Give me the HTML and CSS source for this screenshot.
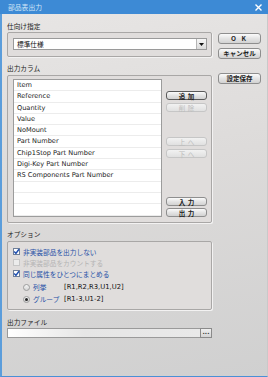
FILE: index.html
```html
<!DOCTYPE html>
<html lang="ja">
<head>
    <meta charset="UTF-8">
    <title>部品表出力</title>
    <link rel="stylesheet" href="styles.css">
</head>
<body>
    <div class="window">
        <div class="titlebar">
            <span class="title">部品表出力</span>
            <svg class="close" width="7" height="7" viewBox="0 0 7 7"><path d="M0.5 0.5 L6.5 6.5 M6.5 0.5 L0.5 6.5" stroke="#fff" stroke-width="1.4"/></svg>
        </div>
        <div class="client">
            <div class="main">
                <div class="label first">仕向け指定</div>
                <div class="group g-dest">
                    <div class="combo">
                        <span class="combo-text">標準仕様</span>
                        <span class="combo-btn"><svg width="5" height="3" viewBox="0 0 5 3"><path d="M0 0 H5 L2.5 3 Z" fill="#111"/></svg></span>
                    </div>
                </div>

                <div class="label">出力カラム</div>
                <div class="group g-cols">
                    <div class="listbox">
                        <div class="row">Item</div>
                        <div class="row">Reference</div>
                        <div class="row">Quantity</div>
                        <div class="row">Value</div>
                        <div class="row">NoMount</div>
                        <div class="row">Part Number</div>
                        <div class="row">Chip1Stop Part Number</div>
                        <div class="row">Digi-Key Part Number</div>
                        <div class="row">RS Components Part Number</div>
                        <div class="row"></div>
                        <div class="row"></div>
                        <div class="row"></div>
                    </div>
                    <div class="list-btns">
                        <button class="btn small default add">追加</button>
                        <button class="btn small disabled del">削除</button>
                        <button class="btn small disabled up">上へ</button>
                        <button class="btn small disabled down">下へ</button>
                        <button class="btn small in">入力</button>
                        <button class="btn small out">出力</button>
                    </div>
                </div>

                <div class="label">オプション</div>
                <div class="group g-opts">
                    <div class="opt">
                        <span class="check on"><svg width="7" height="7" viewBox="0 0 7 7"><path d="M1.2 3.6 L2.9 5.4 L6 1.2" fill="none" stroke="#1f4fb0" stroke-width="1.5"/></svg></span>
                        <span class="opt-text">非実装部品を出力しない</span>
                    </div>
                    <div class="opt dim">
                        <span class="check off"></span>
                        <span class="opt-text">非実装部品をカウントする</span>
                    </div>
                    <div class="opt">
                        <span class="check on"><svg width="7" height="7" viewBox="0 0 7 7"><path d="M1.2 3.6 L2.9 5.4 L6 1.2" fill="none" stroke="#1f4fb0" stroke-width="1.5"/></svg></span>
                        <span class="opt-text">同じ属性をひとつにまとめる</span>
                    </div>
                    <div class="opt radio-row">
                        <span class="radio"></span>
                        <span class="opt-text radio-label">列挙</span>
                        <span class="sample">[R1,R2,R3,U1,U2]</span>
                    </div>
                    <div class="opt radio-row">
                        <span class="radio on"></span>
                        <span class="opt-text radio-label">グループ</span>
                        <span class="sample">[R1-3,U1-2]</span>
                    </div>
                </div>

                <div class="label file-label">出力ファイル</div>
                <div class="file">
                    <div class="file-input"></div>
                    <div class="file-btn">...</div>
                </div>
            </div>
            <div class="side">
                <button class="btn side-btn ok">O K</button>
                <button class="btn side-btn cancel">キャンセル</button>
                <button class="btn side-btn save">設定保存</button>
            </div>
        </div>
    </div>
</body>
</html>
```

FILE: styles.css
```css
* {
    box-sizing: border-box;
}
body {
    margin: 0;
    font-family: "Noto Sans CJK JP", sans-serif;
    font-size: 6.7px;
    color: #222;
}
.window {
    width: 268px;
    height: 377px;
    border-left: 2px solid #5b9ddb;
    border-bottom: 1px solid #4a90d6;
    border-right: 1px solid #c9c9c9;
    background: linear-gradient(170deg, #e8e6e5 0%, #dddbda 45%, #d0d0d0 100%);
    display: flex;
    flex-direction: column;
}
.titlebar {
    height: 14px;
    margin-left: -2px;
    margin-right: -1px;
    background: #3d8ad5;
    display: flex;
    align-items: center;
    justify-content: space-between;
    padding: 0 6px 0 8px;
}
.title {
    color: #d3e6f7;
    font-size: 6.8px;
    line-height: 10px;
}
.close {
    display: block;
}
.client {
    display: flex;
    padding: 7px 0 0 5px;
}
.main {
    width: 205px;
    display: flex;
    flex-direction: column;
}
.label {
    height: 10px;
    line-height: 10px;
    margin-top: 6px;
    margin-bottom: 2px;
    color: #222;
}
.label.first {
    margin-top: 0;
    margin-bottom: 1px;
}
.group {
    border: 1px solid #a9a7a6;
    border-radius: 2px;
    background: #e0dddc;
    box-shadow: 1px 1px 0 #f3f2f2;
}
.g-dest {
    height: 25px;
    padding: 5px 4px 0 5px;
}
.combo {
    height: 12px;
    border: 1px solid #9a9a9a;
    background: #fff;
    display: flex;
    align-items: center;
    justify-content: space-between;
    padding-left: 3px;
}
.combo-text {
    line-height: 10px;
    color: #111;
}
.combo-btn {
    width: 10px;
    height: 10px;
    border-left: 1px solid #b5b5b5;
    background: linear-gradient(#f6f6f6, #dadada);
    display: flex;
    align-items: center;
    justify-content: center;
}
.g-cols {
    height: 148px;
    padding: 3px 0 0 5px;
    display: flex;
}
.listbox {
    width: 149px;
    height: 138px;
    border: 1px solid #9c9c9c;
    background: #fff;
    font-family: "DejaVu Sans", sans-serif;
    font-size: 6.6px;
    color: #222;
}
.row {
    height: 11.3px;
    line-height: 11px;
    padding-left: 3px;
    border-bottom: 1px solid #ececec;
    white-space: nowrap;
}
.list-btns {
    margin-left: 4px;
    width: 41px;
    display: flex;
    flex-direction: column;
    padding-top: 12px;
}
.btn {
    font-family: "Noto Sans CJK JP", sans-serif;
    border: 1px solid #8e8e8e;
    border-radius: 3px;
    background: linear-gradient(#fbfbfb, #e4e4e4 50%, #d2d2d2);
    color: #222;
    padding: 0;
    margin: 0;
    display: flex;
    align-items: center;
    justify-content: center;
    font-weight: bold;
}
.btn.small {
    height: 9px;
    font-size: 6.5px;
    letter-spacing: 2.5px;
    text-indent: 2.5px;
    line-height: 8px;
}
.btn.default {
    border-color: #5b5b5b;
}
.btn.disabled {
    border-color: #c6c6c6;
    color: #bcbcbc;
    background: linear-gradient(#f2f2f2, #e0e0e0);
    font-weight: normal;
}
.del {
    margin-top: 3px;
}
.up {
    margin-top: 25px;
}
.down {
    margin-top: 3px;
}
.in {
    margin-top: 39px;
}
.out {
    margin-top: 2px;
}
.g-opts {
    height: 69px;
    padding: 4px 0 0 5px;
}
.opt {
    height: 11px;
    display: flex;
    align-items: center;
    color: #1f4fa6;
}
.opt.dim {
    color: #b4b4b4;
}
.check {
    width: 7px;
    height: 7px;
    border: 1px solid #6f7f98;
    background: #fff;
    margin-right: 3px;
    display: flex;
    align-items: center;
    justify-content: center;
}
.check svg {
    display: block;
    flex: none;
}
.check.off {
    border-color: #c7c7c7;
    background: #ececec;
}
.opt-text {
    line-height: 10px;
}
.radio-row {
    height: 12px;
    margin-top: 2px;
    margin-bottom: -2px;
    padding-left: 10px;
}
.radio-row + .radio-row {
    margin-top: 2px;
}
.radio {
    width: 7px;
    height: 7px;
    border-radius: 50%;
    border: 1px solid #9c9c9c;
    background: linear-gradient(#f4f4f4, #d6d6d6);
    margin-right: 3px;
    display: flex;
    align-items: center;
    justify-content: center;
}
.radio.on::after {
    content: "";
    width: 3px;
    height: 3px;
    border-radius: 50%;
    background: #222;
}
.radio-label {
    width: 31px;
}
.sample {
    font-family: "DejaVu Sans", sans-serif;
    font-size: 6.8px;
    color: #111;
}
.file-label {
    margin-top: 7px;
    margin-bottom: 1px;
}
.file {
    display: flex;
    height: 10px;
}
.file-input {
    width: 193px;
    border: 1px solid #9a9a9a;
    border-right: none;
    background: linear-gradient(90deg, #fff 0%, #e6e6e6 40%, #e9e9e9 100%);
}
.file-btn {
    width: 12px;
    border: 1px solid #8a8a8a;
    background: linear-gradient(#efefef, #d4d4d4);
    font-family: "DejaVu Sans", sans-serif;
    font-size: 6px;
    font-weight: bold;
    line-height: 5px;
    text-align: center;
    color: #333;
}
.side {
    margin-left: 6px;
    width: 43px;
    padding-top: 12px;
    display: flex;
    flex-direction: column;
}
.side-btn {
    height: 11px;
    font-size: 6.5px;
    line-height: 9px;
}
.ok {
    letter-spacing: 2px;
}
.cancel {
    margin-top: 4px;
}
.save {
    margin-top: 14px;
}
```
